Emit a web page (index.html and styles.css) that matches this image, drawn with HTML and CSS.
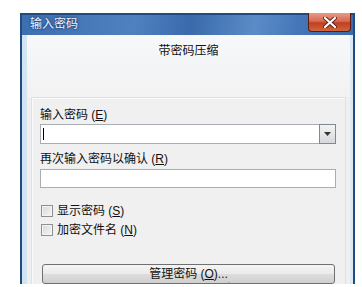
FILE: index.html
```html
<!DOCTYPE html>
<html lang="zh-CN">

<head>
    <meta charset="UTF-8">
    <meta name="viewport" content="width=device-width, initial-scale=1.0">
    <title>输入密码</title>
    <link rel="stylesheet" href="styles.css">
</head>

<body>
    <div class="window">
        <div class="titlebar">
            <span class="title">输入密码</span>
            <button class="close" type="button">
                <svg width="14" height="11" viewBox="0 0 14 11">
                    <path d="M2 1 L12 10 M12 1 L2 10" stroke="#5a2418" stroke-width="4" stroke-linecap="round" />
                    <path d="M2 1 L12 10 M12 1 L2 10" stroke="#fff" stroke-width="2.2" stroke-linecap="round" />
                </svg>
            </button>
        </div>
        <div class="frame">
            <div class="client">
                <div class="header">带密码压缩</div>
                <div class="panel">
                    <label class="label">输入密码 (<u>E</u>)</label>
                    <div class="combo">
                        <span class="caret"></span>
                        <span class="drop">
                            <svg width="7" height="4" viewBox="0 0 7 4">
                                <path d="M0 0 L7 0 L3.5 4 Z" fill="#333" />
                            </svg>
                        </span>
                    </div>
                    <label class="label second">再次输入密码以确认 (<u>R</u>)</label>
                    <div class="textbox"></div>
                    <div class="checks">
                        <div class="check"><span class="box"></span><span>显示密码 (<u>S</u>)</span></div>
                        <div class="check"><span class="box"></span><span>加密文件名 (<u>N</u>)</span></div>
                    </div>
                    <button class="manage" type="button">管理密码 (<u>O</u>)...</button>
                </div>
            </div>
        </div>
        <span class="pointer"></span>
    </div>
</body>

</html>
```

FILE: styles.css
```css
* {
    box-sizing: border-box;
}

body {
    margin: 0;
    padding: 13px 0 0 20px;
    background-color: #fff;
    font-family: "Liberation Sans", "Noto Sans CJK SC", sans-serif;
    font-size: 12px;
    color: #111;
}

.window {
    position: relative;
    display: flex;
    flex-direction: column;
    width: 335px;
    height: 271px;
    border: 2px solid #1f4d82;
    border-bottom: none;
    background: linear-gradient(100deg, #3d6fb0 0%, #4f80c0 30%, #3a6aab 45%, #5b8cc8 62%, #4274b6 75%, #3765a6 100%);
}

.titlebar {
    display: flex;
    align-items: flex-start;
    justify-content: space-between;
    height: 20px;
    padding-left: 8px;
}

.title {
    margin-top: 2px;
    line-height: 15px;
    color: #eef4ff;
    text-shadow: 0 0 3px #1d3f73, 0 0 2px #1d3f73;
}

.close {
    display: flex;
    align-items: center;
    justify-content: center;
    width: 43px;
    height: 19px;
    margin: -2px 2px 0 0;
    padding: 0;
    border: 1px solid #5b1b10;
    border-top: none;
    border-radius: 0 0 4px 4px;
    background: linear-gradient(#e89a86 0%, #d66b52 45%, #c0401f 55%, #d0653c 100%);
}

.frame {
    flex: 1;
    display: flex;
    padding: 0 3px 0 5px;
    background: linear-gradient(90deg, #cfe3f2, #e8f3ea 8%, #dbe9f4);
}

.client {
    flex: 1;
    display: flex;
    flex-direction: column;
    background-color: #f0f0f0;
}

.header {
    height: 62px;
    padding-top: 9px;
    text-align: center;
    line-height: 14px;
    background: linear-gradient(#f6f8fb, #f2f2f2);
}

.panel {
    flex: 1;
    display: flex;
    flex-direction: column;
    margin: 0 4px 0 4px;
    padding: 10px 9px 0 8px;
    border: 1px solid #e0e0e0;
    border-bottom: none;
    box-shadow: inset 1px 1px 0 #fafafa;
}

.label {
    line-height: 14px;
    height: 14px;
}

.second {
    margin-top: 8px;
}

u {
    text-underline-offset: 1px;
}

.combo {
    display: flex;
    align-items: center;
    justify-content: space-between;
    height: 20px;
    margin-top: 2px;
    border: 1px solid #a9acb2;
    background-color: #fff;
}

.caret {
    width: 1px;
    height: 12px;
    margin-left: 2px;
    background-color: #000;
}

.drop {
    display: flex;
    align-items: center;
    justify-content: center;
    width: 17px;
    height: 20px;
    margin-right: -1px;
    border: 1px solid #808890;
    background: linear-gradient(#f3f3f3, #d6d8db);
}

.textbox {
    height: 19px;
    margin-top: 3px;
    border: 1px solid #abadb3;
    background-color: #fff;
}

.checks {
    display: flex;
    flex-direction: column;
    gap: 5px;
    margin-top: 16px;
}

.check {
    display: flex;
    align-items: center;
    gap: 4px;
    height: 14px;
    line-height: 14px;
}

.box {
    width: 12px;
    height: 12px;
    margin-left: 1px;
    border: 1px solid #8e8f8f;
    background: linear-gradient(135deg, #d8d8d8, #f6f6f6);
    box-shadow: inset 0 0 0 1px #f4f4f4;
}

.manage {
    height: 20px;
    margin: 27px 1px 0 2px;
    padding: 0;
    border: 1px solid #707070;
    border-radius: 3px;
    background: linear-gradient(#f4f4f4 0%, #ebebeb 48%, #dddddd 52%, #cfcfcf 100%);
    font-family: inherit;
    font-size: 12px;
    line-height: 14px;
    color: #111;
}

.pointer {
    position: absolute;
    left: 203px;
    bottom: -3px;
    width: 0;
    height: 0;
    border-left: 4px solid transparent;
    border-right: 4px solid transparent;
    border-bottom: 5px solid #3a9a9a;
}
```
